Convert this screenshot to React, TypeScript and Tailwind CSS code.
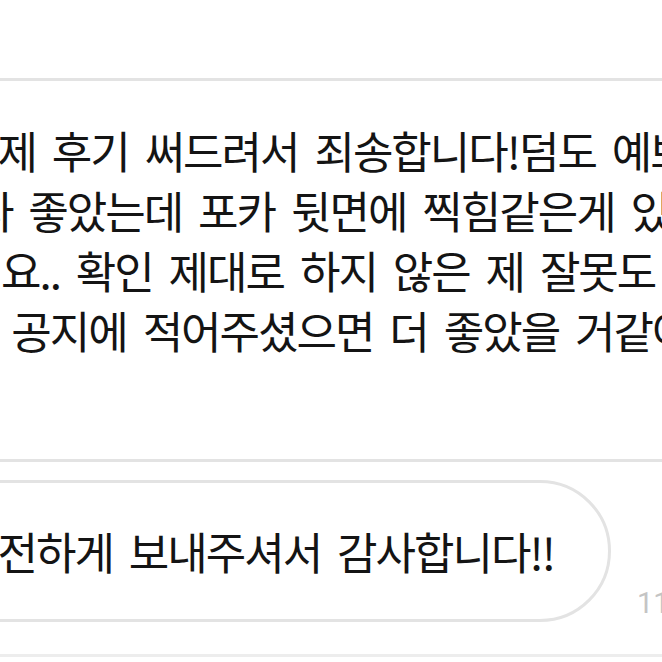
import React from "react";

export default function App() {
  return (
    <div className="w-[662px] h-[662px] overflow-hidden bg-white font-['Noto_Sans_CJK_KR','Noto_Sans',sans-serif] text-[#141414]">
      <div className="pt-[78px] flex flex-col">
        {/* first bubble */}
        <div className="-ml-[100px] w-[900px] h-[384px] shrink-0 border-[3px] border-[#e3e3e3] rounded-[60px] pl-[97px] pt-[39px] overflow-hidden">
          <div className="text-[44px] font-normal leading-[60px] tracking-[-2px] [word-spacing:8px] whitespace-nowrap">
            <div className="-ml-[41px]">이제 후기 써드려서 죄송합니다!덤도 예쁘고</div>
            <div className="-ml-[26px]">다 좋았는데 포카 뒷면에 찍힘같은게 있더라구</div>
            <div className="ml-[1px]">요.. 확인 제대로 하지 않은 제 잘못도 있지만</div>
            <div className="-ml-[43px]">만 공지에 적어주셨으면 더 좋았을 거같아요</div>
          </div>
        </div>

        {/* second bubble row */}
        <div className="mt-[18px] flex items-end">
          <div className="-ml-[100px] w-[711px] h-[142px] shrink-0 border-[3px] border-[#e3e3e3] rounded-full pl-[97px] pt-[38px] overflow-hidden">
            <div className="text-[44px] font-normal leading-[60px] tracking-[-2px] [word-spacing:8px] whitespace-nowrap -ml-[41px]">
              안전하게 보내주셔서 감사합니다!!
            </div>
          </div>
          <div className="ml-[26px] mb-[4px] shrink-0 text-[29px] leading-[29px] font-['Roboto',sans-serif] text-[#c4c4c4] whitespace-nowrap">
            11:32
          </div>
        </div>

        {/* next bubble top edge */}
        <div className="mt-[32px] -ml-[100px] w-[900px] h-[100px] shrink-0 border-t-[3px] border-[#ededed]" />
      </div>
    </div>
  );
}
